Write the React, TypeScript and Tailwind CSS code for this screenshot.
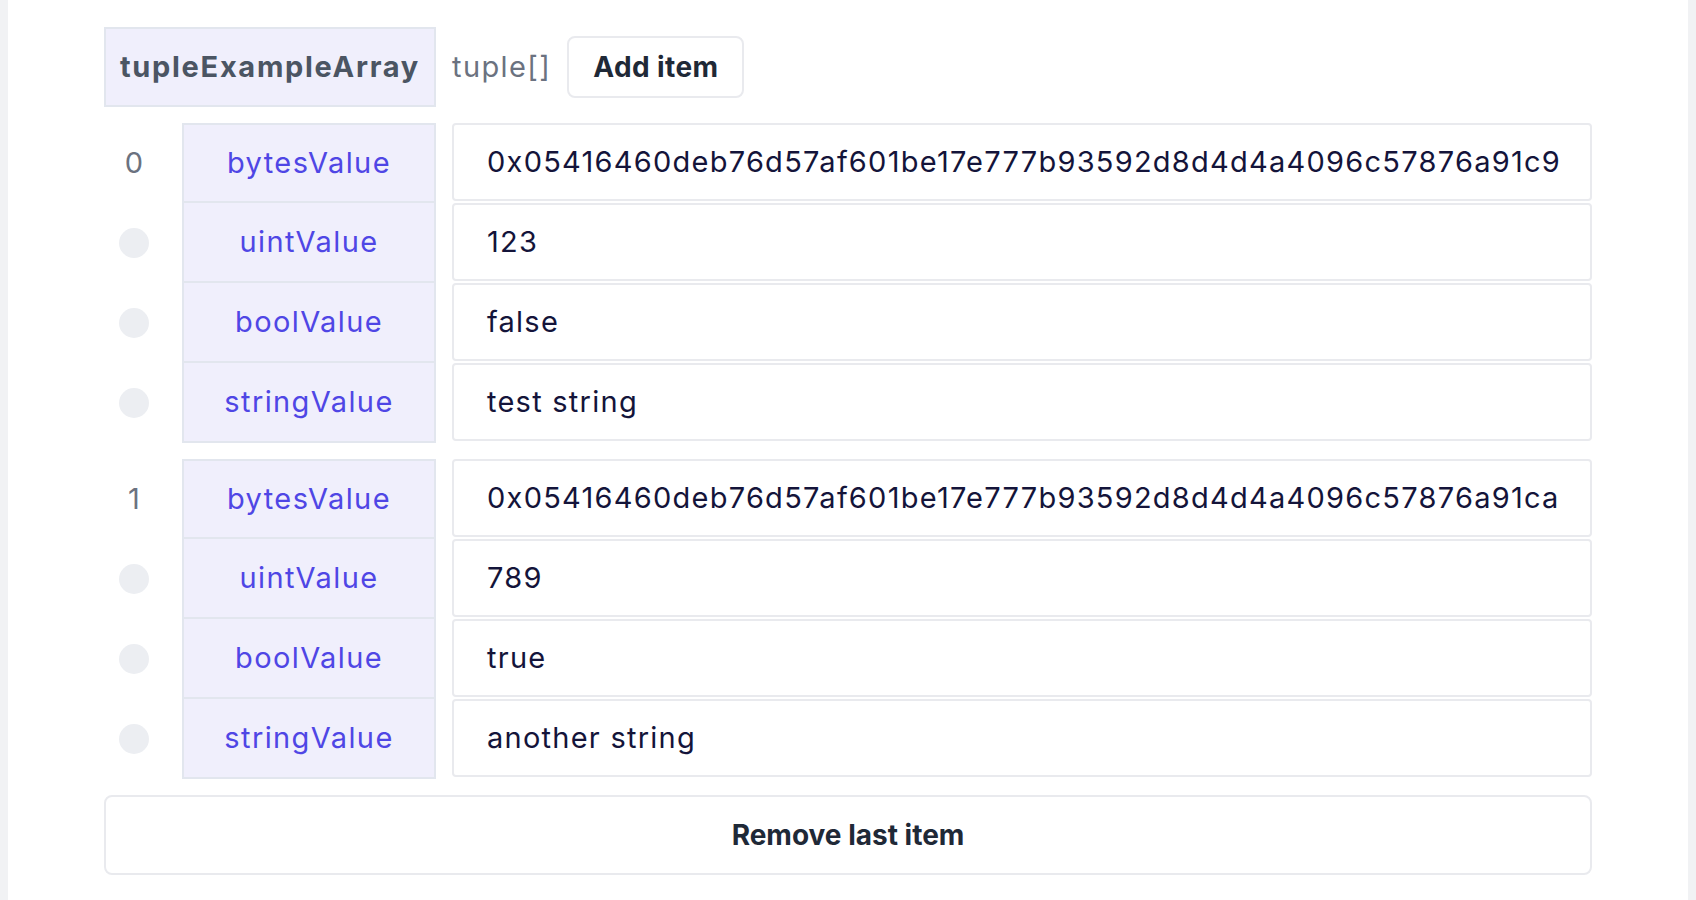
import React from "react";

type Field = { name: string; value: string };

const items: Field[][] = [
  [
    { name: "bytesValue", value: "0x05416460deb76d57af601be17e777b93592d8d4d4a4096c57876a91c9" },
    { name: "uintValue", value: "123" },
    { name: "boolValue", value: "false" },
    { name: "stringValue", value: "test string" },
  ],
  [
    { name: "bytesValue", value: "0x05416460deb76d57af601be17e777b93592d8d4d4a4096c57876a91ca" },
    { name: "uintValue", value: "789" },
    { name: "boolValue", value: "true" },
    { name: "stringValue", value: "another string" },
  ],
];

function TupleGroup({ index, fields }: { index: number; fields: Field[] }) {
  return (
    <div className="flex flex-col">
      {fields.map((f, i) => (
        <div key={f.name} className="flex h-20">
          <div className="w-[60px] mr-[18px] flex items-center justify-center">
            {i === 0 ? (
              <span className="text-[29px] text-[#6b7280]">{index}</span>
            ) : (
              <span className="block w-[30px] h-[30px] rounded-full bg-[#eceef2]" />
            )}
          </div>
          <div
            className={
              "w-[254px] border-2 border-[#e2e6ee] bg-[#f0effc] flex items-center justify-center text-[29px] tracking-[1.4px] text-[#4f46e5] " +
              (i === 0 ? "" : "border-t-0")
            }
          >
            {f.name}
          </div>
          <div className="ml-4 flex-1 h-[78px] border-2 border-[#e9eaee] rounded flex items-center pl-[33px] text-[29px] tracking-[1.25px] text-[#14143a] whitespace-nowrap overflow-hidden">
            {f.value}
          </div>
        </div>
      ))}
    </div>
  );
}

export default function App() {
  return (
    <div className="min-h-screen bg-[#f1f2f4] px-2" style={{ fontFamily: "Inter, 'Liberation Sans', sans-serif" }}>
      <div className="bg-white h-[900px] px-[96px] pt-[27px]">
        <div className="flex items-center">
          <div className="w-[332px] h-[80px] border-2 border-[#e2e6ee] bg-[#f0effc] flex items-center justify-center text-[29px] tracking-[1.7px] font-bold text-[#4b5563]">
            tupleExampleArray
          </div>
          <span className="ml-4 text-[29px] tracking-[1.4px] text-[#6b7280]">tuple[]</span>
          <button className="ml-4 h-[62px] px-[24px] border-2 border-[#e9eaee] rounded-lg text-[28px] tracking-[0.4px] font-bold text-[#1f2937]">
            Add item
          </button>
        </div>
        <div className="mt-4 flex flex-col gap-4">
          {items.map((fields, i) => (
            <TupleGroup key={i} index={i} fields={fields} />
          ))}
        </div>
        <button className="mt-4 w-full h-[80px] border-2 border-[#e9eaee] rounded-lg text-[28px] font-bold text-[#1f2937]">
          Remove last item
        </button>
      </div>
    </div>
  );
}
